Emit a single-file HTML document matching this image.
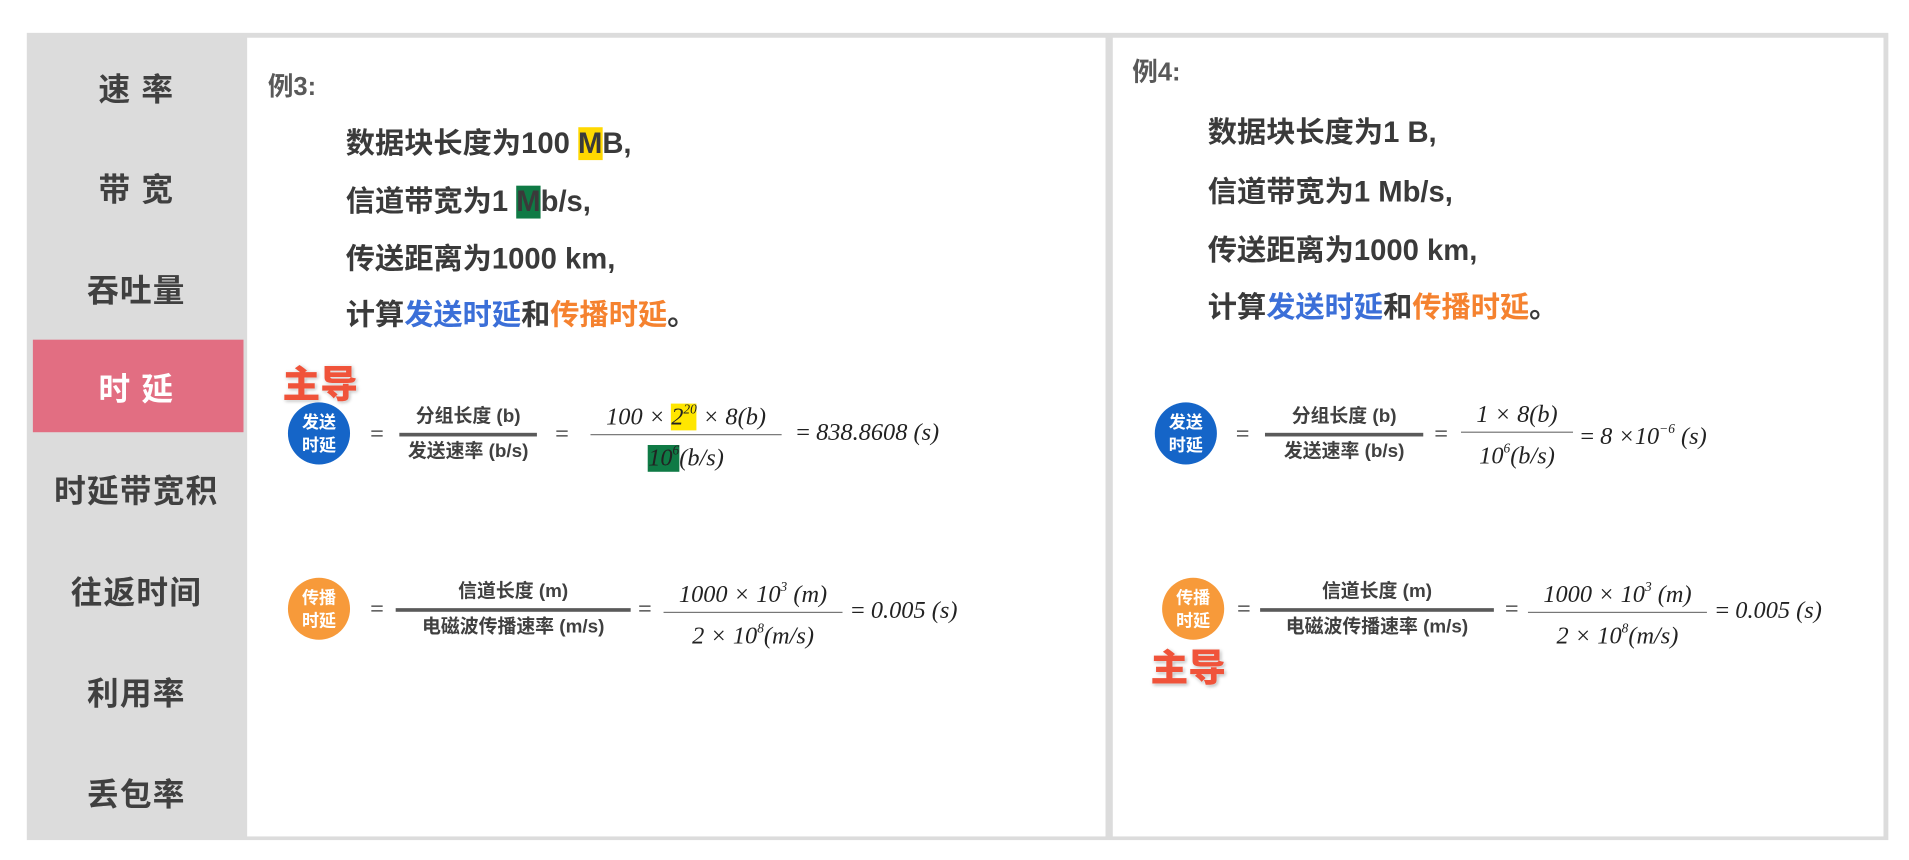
<!DOCTYPE html>
<html><head><meta charset="utf-8"><style>
html,body{margin:0;padding:0;background:#fff;width:1909px;height:859px;overflow:hidden}
#s{position:absolute;left:0;top:0;width:1568px;height:706px;transform:scale(1.2175);transform-origin:0 0;font-family:"Liberation Sans","Noto Sans CJK SC",sans-serif}
.a{position:absolute;white-space:nowrap}
.c{transform:translate(-50%,-50%);text-align:center}
.v{transform:translateY(-50%)}
.side{font-size:26px;font-weight:bold;color:#404040;letter-spacing:1px}
.ln{font-size:24px;font-weight:bold;color:#3a3a3a}
.cir{width:51px;height:51px;border-radius:50%;color:#fff;font-size:14px;font-weight:bold;line-height:19px;display:flex;align-items:center;justify-content:center;text-align:center;transform:translate(-50%,-50%)}
.zd{font-size:31px;font-weight:900;color:#f0533a;text-shadow:0 0 2px #fff,1px 1px 3px rgba(0,0,0,.35)}
.fr{display:flex;flex-direction:column;align-items:center;transform:translateY(-50%)}
.cn{font-size:15.5px;font-weight:bold;color:#404040;line-height:26px}
.b3{height:3px;background:#5a5a5a;align-self:stretch}
.b1{height:1px;background:#777;align-self:stretch}
.m{font-family:"Liberation Serif",serif;font-style:italic;font-size:20px;color:#222;line-height:27px}
.eq{font-family:"Liberation Serif",serif;font-size:20px;color:#333}
sup{font-size:11px;vertical-align:9px}
</style></head><body><div id="s">
<div class="a" style="left:22px;top:27px;width:1529px;height:663px;background:#dcdcdc"></div>
<div class="a" style="left:203px;top:31px;width:705px;height:656px;background:#fff"></div>
<div class="a" style="left:914px;top:31px;width:633px;height:656px;background:#fff"></div>
<div class="a" style="left:27px;top:279px;width:173px;height:76px;background:#e26e82"></div>
<div class="a side c" style="left:112px;top:72px">速 率</div>
<div class="a side c" style="left:112px;top:154px">带 宽</div>
<div class="a side c" style="left:112px;top:237px">吞吐量</div>
<div class="a side c" style="left:112px;top:318px;color:#fff">时 延</div>
<div class="a side c" style="left:112px;top:402px">时延带宽积</div>
<div class="a side c" style="left:112px;top:485px">往返时间</div>
<div class="a side c" style="left:112px;top:568px">利用率</div>
<div class="a side c" style="left:112px;top:651px">丢包率</div>

<div class="a v" style="left:220px;top:70px;font-size:21px;font-weight:bold;color:#595959">例3:</div>
<div class="a ln v" style="left:284px;top:115px">数据块长度为100 <span style="background:#ffd800">M</span>B,</div>
<div class="a ln v" style="left:284px;top:163px">信道带宽为1 <span style="background:#0f7a45">M</span>b/s,</div>
<div class="a ln v" style="left:284px;top:210px">传送距离为1000 km,</div>
<div class="a ln v" style="left:284px;top:256px">计算<span style="color:#3b6fd8">发送时延</span>和<span style="color:#f5822f">传播时延</span>。</div>
<div class="a zd v" style="left:232px;top:313px">主导</div>
<div class="a cir" style="left:262px;top:356px;background:#1565c8">发送<br>时延</div>
<div class="a eq v" style="left:304px;top:357px">=</div>
<div class="a fr" style="left:328px;top:357px;width:113px"><div class="cn">分组长度 (b)</div><div class="b3"></div><div class="cn">发送速率 (b/s)</div></div>
<div class="a eq v" style="left:456px;top:357px">=</div>
<div class="a fr" style="left:485px;top:357px;width:157px"><div class="m">100 × <span style="background:#ffe600">2<sup>20</sup></span> × 8(b)</div><div class="b1"></div><div class="m"><span style="background:#0f7a45">10<sup>6</sup></span>(b/s)</div></div>
<div class="a m v" style="left:654px;top:356px"><span style="font-style:normal">=</span> 838.8608 (s)</div>

<div class="a cir" style="left:262px;top:500px;background:#f79a3a">传播<br>时延</div>
<div class="a eq v" style="left:304px;top:501px">=</div>
<div class="a fr" style="left:325px;top:501px;width:193px"><div class="cn">信道长度 (m)</div><div class="b3"></div><div class="cn">电磁波传播速率 (m/s)</div></div>
<div class="a eq v" style="left:524px;top:501px">=</div>
<div class="a fr" style="left:545px;top:503px;width:147px"><div class="m">1000 × 10<sup>3</sup> (m)</div><div class="b1"></div><div class="m">2 × 10<sup>8</sup>(m/s)</div></div>
<div class="a m v" style="left:699px;top:502px"><span style="font-style:normal">=</span> 0.005 (s)</div>

<div class="a v" style="left:930px;top:58px;font-size:21px;font-weight:bold;color:#595959">例4:</div>
<div class="a ln v" style="left:992px;top:106px">数据块长度为1 B,</div>
<div class="a ln v" style="left:992px;top:155px">信道带宽为1 Mb/s,</div>
<div class="a ln v" style="left:992px;top:203px">传送距离为1000 km,</div>
<div class="a ln v" style="left:992px;top:250px">计算<span style="color:#3b6fd8">发送时延</span>和<span style="color:#f5822f">传播时延</span>。</div>
<div class="a cir" style="left:974px;top:356px;background:#1565c8">发送<br>时延</div>
<div class="a eq v" style="left:1015px;top:357px">=</div>
<div class="a fr" style="left:1039px;top:357px;width:130px"><div class="cn">分组长度 (b)</div><div class="b3"></div><div class="cn">发送速率 (b/s)</div></div>
<div class="a eq v" style="left:1178px;top:357px">=</div>
<div class="a fr" style="left:1200px;top:358px;width:92px"><div class="m">1 × 8(b)</div><div class="b1"></div><div class="m">10<sup>6</sup>(b/s)</div></div>
<div class="a m v" style="left:1298px;top:356px"><span style="font-style:normal">=</span> 8 ×10<sup>−6</sup> (s)</div>

<div class="a cir" style="left:980px;top:500px;background:#f79a3a">传播<br>时延</div>
<div class="a eq v" style="left:1016px;top:501px">=</div>
<div class="a fr" style="left:1035px;top:501px;width:192px"><div class="cn">信道长度 (m)</div><div class="b3"></div><div class="cn">电磁波传播速率 (m/s)</div></div>
<div class="a eq v" style="left:1236px;top:501px">=</div>
<div class="a fr" style="left:1255px;top:503px;width:147px"><div class="m">1000 × 10<sup>3</sup> (m)</div><div class="b1"></div><div class="m">2 × 10<sup>8</sup>(m/s)</div></div>
<div class="a m v" style="left:1409px;top:502px"><span style="font-style:normal">=</span> 0.005 (s)</div>
<div class="a zd v" style="left:945px;top:546px">主导</div>
</div></body></html>
